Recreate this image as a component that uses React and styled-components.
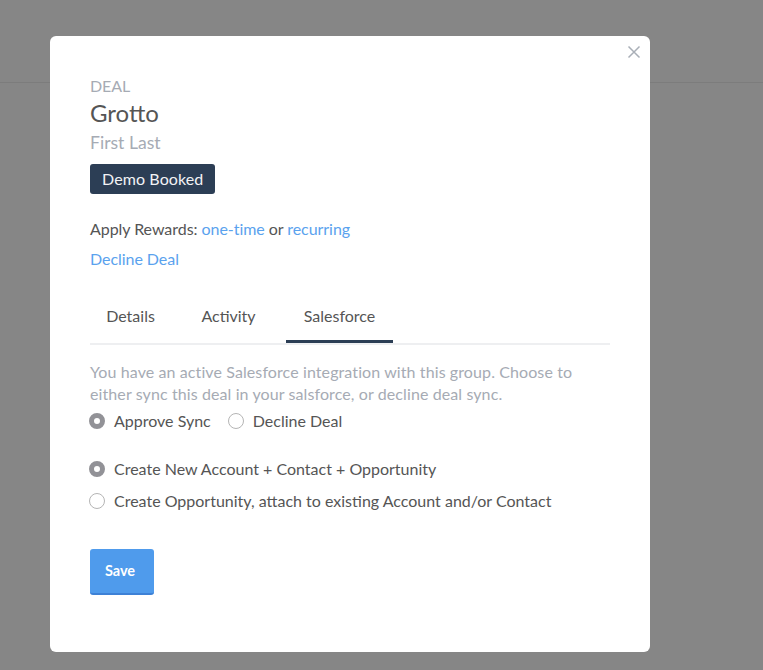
import React from "react";
import styled, { createGlobalStyle } from "styled-components";

const Global = createGlobalStyle`
  html, body { margin: 0; padding: 0; height: 100%; background: #868686; }
  body { font-family: Lato, "Open Sans", "Liberation Sans", sans-serif; overflow: hidden; }
  * { box-sizing: border-box; }
`;
const Page = styled.div`position: relative; width: 763px; height: 670px; background: #868686;`;
const TopBar = styled.div`height: 83px; border-bottom: 1px solid #7c7c7c;`;
const Modal = styled.div`
  position: absolute; left: 50px; top: 36px; width: 600px; height: 616px;
  background: #fff; border-radius: 6px; padding: 39px 40px 0;
  color: #555; font-size: 16px;
`;
const Close = styled.button`
  position: absolute; top: 9px; right: 9px; width: 14px; height: 14px; padding: 0;
  border: 0; background: none; color: #a9afb7; display: flex;
`;
const Eyebrow = styled.div`font-size: 16px; line-height: 22px; color: #a6abb4; height: 22px; letter-spacing: -0.1px;`;
const Title = styled.h1`margin: 1px 0 0; font-size: 24px; line-height: 30px; font-weight: 400; color: #555;`;
const Subtitle = styled.div`margin-top: 3px; font-size: 17.6px; line-height: 24px; color: #a6abb4;`;
const Badge = styled.div`
  display: inline-flex; align-items: center; margin-top: 9px; height: 30px; padding: 0 12px 2px;
  background: #2c3e55; color: #f2f3f5; border-radius: 3px; font-size: 16px; letter-spacing: 0.1px;
`;
const Line = styled.div`margin-top: ${p => p.$top}px; line-height: 22px; font-size: 16px; letter-spacing: -0.05px;`;
const Link = styled.a`color: #5aa2ee; text-decoration: none;`;
const Tabs = styled.div`display: flex; gap: 16px; margin-top: 24px; height: 51px; border-bottom: 2px solid #eeeff1;`;
const Tab = styled.div`
  width: ${p => p.$w}px; height: 49px; padding-bottom: 3px; display: flex; align-items: center; justify-content: center;
  font-size: 16px; color: #555;
  border-bottom: 3px solid ${p => (p.$active ? "#2c3e55" : "transparent")};
`;
const Intro = styled.p`margin: 16px 0 0; font-size: 16px; line-height: 22px; color: #a6abb4; width: 510px; letter-spacing: 0.1px;`;
const RadioRow = styled.div`display: flex; gap: 18px; margin-top: ${p => p.$top}px; height: 22px; align-items: center;`;
const RadioLabel = styled.label`display: flex; align-items: center; gap: 9px; color: #555; font-size: 16px;`;
const Dot = styled.span`
  width: 16px; height: 16px; border-radius: 50%; margin: 2px 0 0 -1px; flex: none;
  ${p => p.$on
    ? "background: #fff; border: 5px solid #929297;"
    : "background: #fff; border: 1px solid #b5b5b5;"}
`;
const Save = styled.button`
  display: block; margin-top: 38px; width: 64px; height: 46px; border: 0; border-bottom: 2px solid #3d81d6;
  padding: 0 4px 2px 0;
  border-radius: 3px; background: #4f9bec; color: #fff; font: 700 14.5px Lato, sans-serif;
`;

const Radio = ({ on, children }) => (
  <RadioLabel><Dot $on={on} />{children}</RadioLabel>
);

export default function App() {
  return (
    <Page>
      <Global />
      <TopBar />
      <Modal>
        <Close aria-label="Close">
          <svg width="14" height="14" viewBox="0 0 14 14" fill="none" stroke="currentColor" strokeWidth="1.5">
            <path d="M1.5 1.5l11 11M12.5 1.5l-11 11" />
          </svg>
        </Close>
        <Eyebrow>DEAL</Eyebrow>
        <Title>Grotto</Title>
        <Subtitle>First Last</Subtitle>
        <Badge>Demo Booked</Badge>
        <Line $top={24}>Apply Rewards: <Link>one-time</Link> or <Link>recurring</Link></Line>
        <Line $top={8}><Link>Decline Deal</Link></Line>
        <Tabs>
          <Tab $w={81}>Details</Tab>
          <Tab $w={83}>Activity</Tab>
          <Tab $w={107} $active>Salesforce</Tab>
        </Tabs>
        <Intro>You have an active Salesforce integration with this group. Choose to either sync this deal in your salsforce, or decline deal sync.</Intro>
        <RadioRow $top={4}>
          <Radio on>Approve Sync</Radio>
          <Radio>Decline Deal</Radio>
        </RadioRow>
        <RadioRow $top={26}><Radio on>Create New Account + Contact + Opportunity</Radio></RadioRow>
        <RadioRow $top={10}><Radio>Create Opportunity, attach to existing Account and/or Contact</Radio></RadioRow>
        <Save>Save</Save>
      </Modal>
    </Page>
  );
}
